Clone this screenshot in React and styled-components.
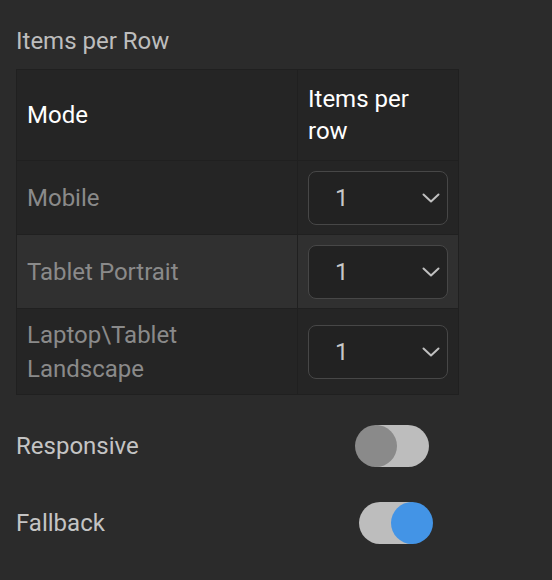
import styled, { createGlobalStyle } from "styled-components";

const GlobalStyle = createGlobalStyle`
  html, body {
    margin: 0;
    padding: 0;
    background-color: #2b2b2b;
  }
  body {
    font-family: Roboto, "Liberation Sans", sans-serif;
  }
`;

const Container = styled.div`
  width: 552px;
  height: 580px;
  box-sizing: border-box;
  padding: 24px 16px 0 16px;
  background-color: #2b2b2b;
`;

const Title = styled.h3`
  margin: 0 0 11px 0;
  font-size: 24px;
  font-weight: 400;
  line-height: 34px;
  color: #bdbdbd;
`;

const Table = styled.table`
  width: 442px;
  border-collapse: collapse;
  table-layout: fixed;
  background-color: #252525;
`;

const HeadCell = styled.th`
  padding: 13px 10px;
  border: 1px solid #202020;
  text-align: left;
  font-size: 24px;
  font-weight: 400;
  line-height: 32px;
  color: #ffffff;
  width: ${(p) => p.width}px;
  box-sizing: border-box;
`;

const Row = styled.tr`
  background-color: ${(p) => (p.highlight ? "#303030" : "#252525")};
`;

const Cell = styled.td`
  padding: ${(p) => (p.tight ? "9px 10px 8px" : "10px 10px 9px")};
  border: 1px solid #202020;
  font-size: 24px;
  line-height: 34px;
  color: #8a8a8a;
  vertical-align: middle;
`;

const Select = styled.div`
  height: 54px;
  box-sizing: border-box;
  border: 1.5px solid #474747;
  border-radius: 8px;
  background-color: #222222;
  display: flex;
  align-items: center;
  justify-content: space-between;
  padding: 0 7px 0 26px;
  font-size: 24px;
  color: #c8c8c8;
`;

const Settings = styled.div`
  margin-top: 30px;
  display: flex;
  flex-direction: column;
  gap: 35px;
`;

const SettingRow = styled.div`
  display: flex;
  align-items: center;
  height: 42px;
`;

const Label = styled.span`
  width: 343px;
  font-size: 24px;
  color: #c4c4c4;
`;

const Track = styled.div`
  position: relative;
  width: 70px;
  height: 42px;
  border-radius: 21px;
  background-color: #bdbdbd;
`;

const Knob = styled.div`
  position: absolute;
  top: 0;
  left: ${(p) => (p.on ? "32px" : "-4px")};
  width: 42px;
  height: 42px;
  border-radius: 50%;
  background-color: ${(p) => (p.on ? "#4394e6" : "#8a8a8a")};
`;

const Chevron = () => (
  <svg width="18" height="10" viewBox="0 0 18 10" fill="none">
    <polyline
      points="1.5,1.5 9,8.5 16.5,1.5"
      stroke="#c0c0c0"
      strokeWidth="2"
      strokeLinecap="round"
      strokeLinejoin="round"
    />
  </svg>
);

const Dropdown = ({ value }) => (
  <Select>
    <span>{value}</span>
    <Chevron />
  </Select>
);

const Toggle = ({ on }) => (
  <Track>
    <Knob on={on} />
  </Track>
);

const modes = [
  { name: "Mobile", value: 1 },
  { name: "Tablet Portrait", value: 1, highlight: true },
  { name: "Laptop\\Tablet Landscape", value: 1, tight: true },
];

const App = () => {
  return (
    <Container>
      <GlobalStyle />
      <Title>Items per Row</Title>
      <Table>
        <thead>
          <tr>
            <HeadCell width={281}>Mode</HeadCell>
            <HeadCell width={161}>Items per row</HeadCell>
          </tr>
        </thead>
        <tbody>
          {modes.map((m) => (
            <Row key={m.name} highlight={m.highlight}>
              <Cell tight={m.tight}>{m.name}</Cell>
              <Cell>
                <Dropdown value={m.value} />
              </Cell>
            </Row>
          ))}
        </tbody>
      </Table>
      <Settings>
        <SettingRow>
          <Label>Responsive</Label>
          <Toggle on={false} />
        </SettingRow>
        <SettingRow>
          <Label>Fallback</Label>
          <Toggle on={true} />
        </SettingRow>
      </Settings>
    </Container>
  );
};

export default App;
